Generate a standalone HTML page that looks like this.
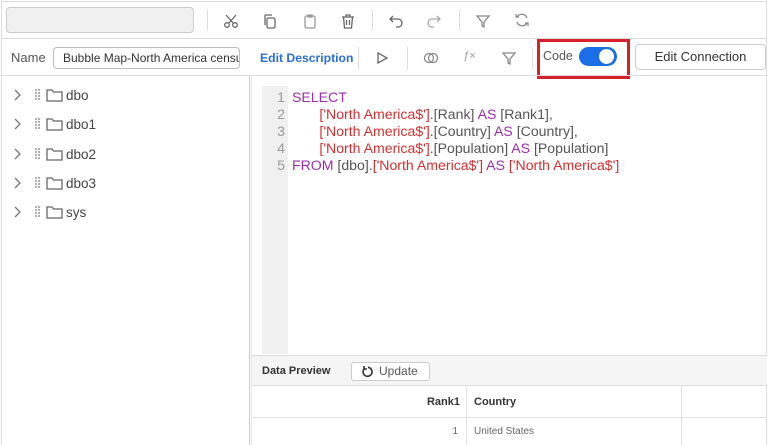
<!DOCTYPE html>
<html><head><meta charset="utf-8"><style>
*{box-sizing:border-box;margin:0;padding:0}
body{width:768px;height:445px;background:#fff;font-family:"Liberation Sans",sans-serif;position:relative;overflow:hidden;color:#333}
.a{position:absolute}
.ic{position:absolute;stroke:#666;fill:none;stroke-width:1.3}
.code{font-size:14.1px;line-height:17px;color:#555}
.k{color:#9b2fae}.s{color:#d32f2f}
.row{height:29.3px;position:relative}
</style></head><body>
<div class="a" style="left:1px;top:1px;right:1px;bottom:0;border:1px solid #ddd;border-bottom:none"></div>
<!-- toolbar -->
<div class="a" style="left:6px;top:7px;width:188px;height:26px;background:#f0f0f0;border:1px solid #ccc;border-radius:4px"></div>
<div class="a" style="left:207px;top:10px;width:1px;height:20px;background:#ddd"></div>
<div class="a" style="left:372px;top:10px;width:1px;height:20px;background:#ddd"></div>
<div class="a" style="left:459px;top:10px;width:1px;height:20px;background:#ddd"></div>
<svg class="ic" style="left:223px;top:13px" width="16" height="16"><circle cx="4" cy="12" r="2.3"/><circle cx="12" cy="12" r="2.3"/><path d="M5.5 10.5L13 2M10.5 10.5L3 2"/></svg>
<svg class="ic" style="left:262px;top:13px" width="16" height="16"><rect x="5" y="5" width="8" height="10" rx="1.5"/><path d="M3 12V3a1 1 0 0 1 1-1h6"/></svg>
<svg class="ic" style="left:302px;top:13px;stroke:#999" width="16" height="16"><rect x="3" y="3" width="10" height="12" rx="1.5"/><path d="M6 2h4v2H6z"/></svg>
<svg class="ic" style="left:340px;top:13px" width="16" height="16"><path d="M2 4h12M6 4V2h4v2M3.5 4l1 11h7l1-11M6.5 7v5M9.5 7v5"/></svg>
<svg class="ic" style="left:388px;top:13px" width="16" height="16"><path d="M5 3L2 6l3 3M2 6h8a4 4 0 0 1 0 8H8"/></svg>
<svg class="ic" style="left:426px;top:13px;stroke:#aaa" width="16" height="16"><path d="M11 3l3 3-3 3M14 6H6a4 4 0 0 0 0 8h2"/></svg>
<svg class="ic" style="left:475px;top:13px;stroke:#888" width="16" height="16"><path d="M2 3h12l-5 6v5l-2-1V9z"/></svg>
<svg class="ic" style="left:514px;top:12px;stroke:#888" width="16" height="16"><path d="M13 6a5.5 5.5 0 0 0-10-1M3 10a5.5 5.5 0 0 0 10 1M2 2v3h3M14 14v-3h-3"/></svg>
<div class="a" style="left:1px;top:38px;right:1px;height:1px;background:#ddd"></div>
<!-- row 2 -->
<div class="a" style="left:11px;top:50px;font-size:13px;color:#555">Name</div>
<div class="a" style="left:53px;top:47px;width:187px;height:22px;border:1px solid #bbb;border-radius:4px;font-size:12px;line-height:20px;padding-left:9px;white-space:nowrap;overflow:hidden;color:#333">Bubble Map-North America census data</div>
<div class="a" style="left:260px;top:51px;font-size:12.2px;color:#2c6fd4;font-weight:bold;white-space:nowrap">Edit Description</div>
<div class="a" style="left:358px;top:47px;width:1px;height:22px;background:#ddd"></div>
<svg class="ic" style="left:375px;top:51px" width="14" height="14"><path d="M3 2l9 5-9 5z"/></svg>
<div class="a" style="left:407px;top:47px;width:1px;height:22px;background:#ddd"></div>
<svg class="ic" style="left:423px;top:51px;stroke:#888" width="16" height="14"><circle cx="6" cy="7" r="4.5"/><circle cx="10" cy="7" r="4.5"/></svg>
<div class="a" style="left:463px;top:50px;font-size:11px;color:#999;font-style:italic">ƒ×</div>
<svg class="ic" style="left:501px;top:51px;stroke:#888" width="16" height="16"><path d="M2 2h12l-5 6v5l-2-1V8z"/></svg>
<div class="a" style="left:532px;top:47px;width:1px;height:22px;background:#ddd"></div>
<div class="a" style="left:537px;top:39px;width:93px;height:40px;border:3px solid #d9202a"></div>
<div class="a" style="left:543px;top:49px;font-size:12.5px;color:#555">Code</div>
<div class="a" style="left:579px;top:47px;width:38px;height:19px;border-radius:10px;background:#1a6fe8"></div>
<div class="a" style="left:599px;top:49px;width:15px;height:15px;border-radius:50%;background:#fff"></div>
<div class="a" style="left:635px;top:44px;width:131px;height:26px;border:1px solid #ccc;border-radius:4px;font-size:13px;line-height:24px;text-align:center;color:#333">Edit Connection</div>
<div class="a" style="left:1px;top:75px;right:1px;height:1px;background:#ddd"></div>
<!-- left tree -->
<div class="a" style="left:249px;top:76px;width:1px;height:369px;background:#ccc"></div>
<div class="a" style="left:251px;top:76px;width:1px;height:369px;background:#e6e6e6"></div>
<div class="a" style="left:0;top:87px;font-size:13.5px;color:#444">
 <div class="row"><svg class="ic" style="left:13px;top:2px;stroke:#777" width="8" height="12"><path d="M2 1l5 5-5 5"/></svg><svg class="a" style="left:35px;top:2px" width="6" height="12" fill="#777"><circle cx="1" cy="1" r=".9"/><circle cx="4" cy="1" r=".9"/><circle cx="1" cy="4" r=".9"/><circle cx="4" cy="4" r=".9"/><circle cx="1" cy="7" r=".9"/><circle cx="4" cy="7" r=".9"/><circle cx="1" cy="10" r=".9"/><circle cx="4" cy="10" r=".9"/></svg><svg class="ic" style="left:46px;top:1px;stroke:#666" width="17" height="14"><path d="M1 2h5l1.5 2H16v9H1z"/></svg><span style="position:absolute;left:66px;top:1px">dbo</span></div>
 <div class="row"><svg class="ic" style="left:13px;top:2px;stroke:#777" width="8" height="12"><path d="M2 1l5 5-5 5"/></svg><svg class="a" style="left:35px;top:2px" width="6" height="12" fill="#777"><circle cx="1" cy="1" r=".9"/><circle cx="4" cy="1" r=".9"/><circle cx="1" cy="4" r=".9"/><circle cx="4" cy="4" r=".9"/><circle cx="1" cy="7" r=".9"/><circle cx="4" cy="7" r=".9"/><circle cx="1" cy="10" r=".9"/><circle cx="4" cy="10" r=".9"/></svg><svg class="ic" style="left:46px;top:1px;stroke:#666" width="17" height="14"><path d="M1 2h5l1.5 2H16v9H1z"/></svg><span style="position:absolute;left:66px;top:1px">dbo1</span></div>
 <div class="row"><svg class="ic" style="left:13px;top:2px;stroke:#777" width="8" height="12"><path d="M2 1l5 5-5 5"/></svg><svg class="a" style="left:35px;top:2px" width="6" height="12" fill="#777"><circle cx="1" cy="1" r=".9"/><circle cx="4" cy="1" r=".9"/><circle cx="1" cy="4" r=".9"/><circle cx="4" cy="4" r=".9"/><circle cx="1" cy="7" r=".9"/><circle cx="4" cy="7" r=".9"/><circle cx="1" cy="10" r=".9"/><circle cx="4" cy="10" r=".9"/></svg><svg class="ic" style="left:46px;top:1px;stroke:#666" width="17" height="14"><path d="M1 2h5l1.5 2H16v9H1z"/></svg><span style="position:absolute;left:66px;top:1px">dbo2</span></div>
 <div class="row"><svg class="ic" style="left:13px;top:2px;stroke:#777" width="8" height="12"><path d="M2 1l5 5-5 5"/></svg><svg class="a" style="left:35px;top:2px" width="6" height="12" fill="#777"><circle cx="1" cy="1" r=".9"/><circle cx="4" cy="1" r=".9"/><circle cx="1" cy="4" r=".9"/><circle cx="4" cy="4" r=".9"/><circle cx="1" cy="7" r=".9"/><circle cx="4" cy="7" r=".9"/><circle cx="1" cy="10" r=".9"/><circle cx="4" cy="10" r=".9"/></svg><svg class="ic" style="left:46px;top:1px;stroke:#666" width="17" height="14"><path d="M1 2h5l1.5 2H16v9H1z"/></svg><span style="position:absolute;left:66px;top:1px">dbo3</span></div>
 <div class="row"><svg class="ic" style="left:13px;top:2px;stroke:#777" width="8" height="12"><path d="M2 1l5 5-5 5"/></svg><svg class="a" style="left:35px;top:2px" width="6" height="12" fill="#777"><circle cx="1" cy="1" r=".9"/><circle cx="4" cy="1" r=".9"/><circle cx="1" cy="4" r=".9"/><circle cx="4" cy="4" r=".9"/><circle cx="1" cy="7" r=".9"/><circle cx="4" cy="7" r=".9"/><circle cx="1" cy="10" r=".9"/><circle cx="4" cy="10" r=".9"/></svg><svg class="ic" style="left:46px;top:1px;stroke:#666" width="17" height="14"><path d="M1 2h5l1.5 2H16v9H1z"/></svg><span style="position:absolute;left:66px;top:1px">sys</span></div>
</div>
<!-- editor -->
<div class="a" style="left:262px;top:86px;width:26px;height:268px;background:#f0f0f0"></div>
<div class="a code" style="left:262px;top:89px;width:23px;text-align:right;color:#999">1<br>2<br>3<br>4<br>5</div>
<div class="a code" style="left:292px;top:89px;white-space:pre"><span class="k">SELECT</span>
       <span class="s">['North America$']</span>.[Rank] <span class="k">AS</span> [Rank1],
       <span class="s">['North America$']</span>.[Country] <span class="k">AS</span> [Country],
       <span class="s">['North America$']</span>.[Population] <span class="k">AS</span> [Population]
<span class="k">FROM</span> [dbo].<span class="s">['North America$']</span> <span class="k">AS</span> <span class="s">['North America$']</span></div>
<!-- data preview -->
<div class="a" style="left:252px;top:355px;right:1px;height:31px;background:#f5f5f5;border-top:1px solid #ddd;border-bottom:1px solid #ddd"></div>
<div class="a" style="left:262px;top:365px;font-size:11px;font-weight:bold;color:#333">Data Preview</div>
<div class="a" style="left:351px;top:362px;width:79px;height:19px;background:#fff;border:1px solid #ccc;border-radius:3px;font-size:12px;line-height:17px;color:#555;padding-left:27px">Update</div>
<svg class="ic" style="left:361px;top:365px;stroke:#333;stroke-width:1.6" width="13" height="13"><path d="M3 4a4.5 4.5 0 1 0 4-1.7M3 1v3h3"/></svg>
<div class="a" style="left:252px;top:386px;right:1px;height:32px;border-bottom:1px solid #e0e0e0"></div>
<div class="a" style="left:466px;top:386px;width:1px;height:59px;background:#e0e0e0"></div>
<div class="a" style="left:681px;top:386px;width:1px;height:59px;background:#e0e0e0"></div>
<div class="a" style="left:400px;top:396px;width:60px;text-align:right;font-size:11px;font-weight:bold;color:#333">Rank1</div>
<div class="a" style="left:474px;top:396px;font-size:11px;font-weight:bold;color:#333">Country</div>
<div class="a" style="left:400px;top:426px;width:58px;text-align:right;font-size:10px;color:#666">1</div>
<div class="a" style="left:474px;top:426px;font-size:10px;color:#666">United States</div>
</body></html>
